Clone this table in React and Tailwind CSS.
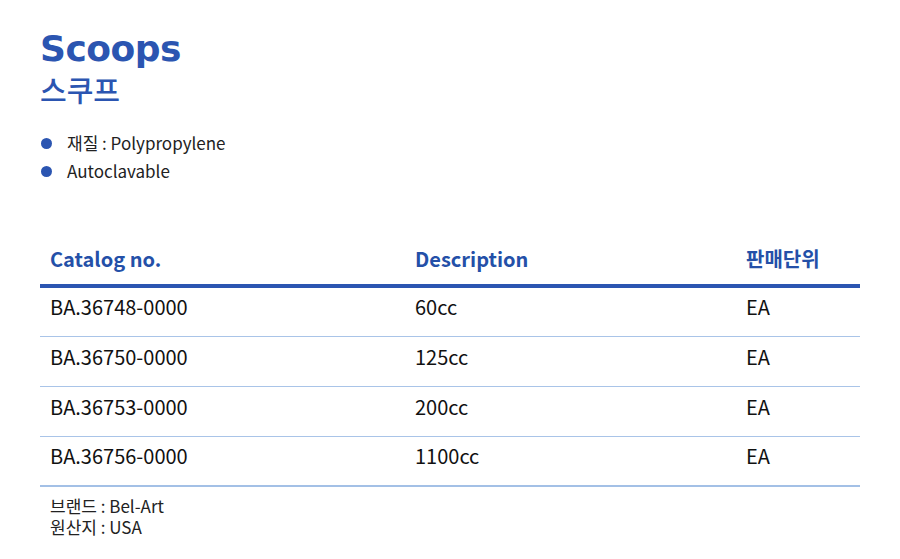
import React from 'react';

const rows = [
  { no: 'BA.36748-0000', desc: '60cc', unit: 'EA' },
  { no: 'BA.36750-0000', desc: '125cc', unit: 'EA' },
  { no: 'BA.36753-0000', desc: '200cc', unit: 'EA' },
  { no: 'BA.36756-0000', desc: '1100cc', unit: 'EA' },
];

const kr = { fontFamily: '"Noto Sans CJK KR", "Noto Sans", sans-serif' };

const App = () => {
  return (
    <div className="w-[900px] h-[559px] bg-white overflow-hidden pl-[40px] pr-[40px]" style={kr}>
      {/* Title */}
      <h1
        className="pt-[27px] text-[36px] leading-[44px] font-bold text-[#2b55b1] tracking-[-0.5px]"
        style={{ fontFamily: '"DejaVu Sans", Verdana, sans-serif' }}
      >
        Scoops
      </h1>
      <h2 className="mt-[1px] text-[29px] leading-[34px] font-medium text-[#2b55b1]">스쿠프</h2>

      {/* Specs */}
      <ul className="mt-[23px] flex flex-col">
        <li className="flex items-center h-[28px] text-[17px] text-[#222]">
          <span className="w-[11px] h-[11px] rounded-full bg-[#2b55b1] ml-[1px] mr-[15px]" />
          재질 : Polypropylene
        </li>
        <li className="flex items-center h-[28px] text-[17px] text-[#222]">
          <span className="w-[11px] h-[11px] rounded-full bg-[#2b55b1] ml-[1px] mr-[15px]" />
          Autoclavable
        </li>
      </ul>

      {/* Table */}
      <div className="mt-[48px] w-[820px]">
        <div className="grid grid-cols-[375px_331px_114px] h-[55px] items-center border-b-[4px] border-[#2b55b1] text-[20px] font-bold text-[#2450a8]">
          <div className="pl-[10px]">Catalog no.</div>
          <div>Description</div>
          <div>판매단위</div>
        </div>
        {rows.map((r, i) => (
          <div
            key={r.no}
            className={`grid grid-cols-[375px_331px_114px] items-center pb-[10px] text-[20px] text-[#111] ${
              i === 0 ? 'h-[49px]' : 'h-[50px]'
            } ${i === rows.length - 1 ? 'border-b-2 border-[#a3c0e6]' : 'border-b border-[#a9c4e8]'}`}
          >
            <div className="pl-[10px]">{r.no}</div>
            <div>{r.desc}</div>
            <div>{r.unit}</div>
          </div>
        ))}
      </div>

      {/* Footer */}
      <div className="mt-[8px] pl-[10px] text-[17px] leading-[21px] text-[#222]">
        <p>브랜드 : Bel-Art</p>
        <p>원산지 : USA</p>
      </div>
    </div>
  );
};

export default App;
